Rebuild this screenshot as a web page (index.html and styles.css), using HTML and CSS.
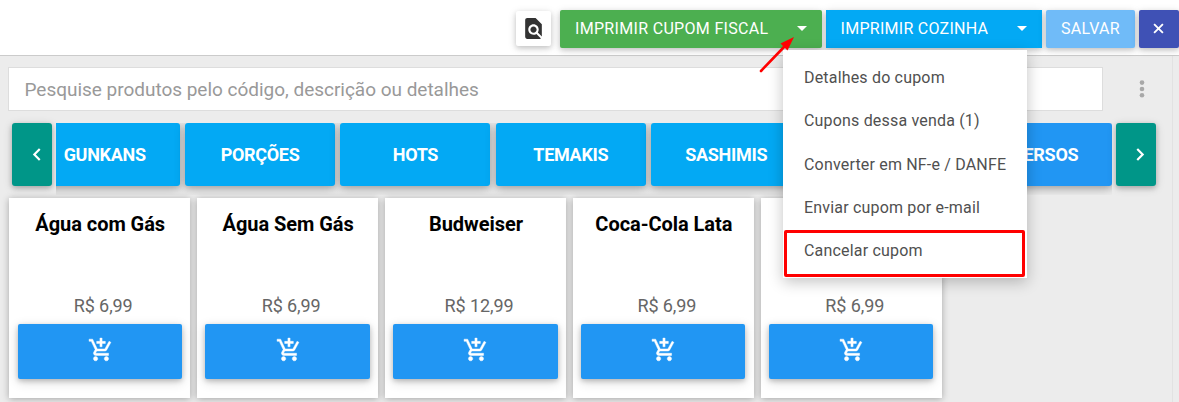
FILE: index.html
```html
<!DOCTYPE html>
<html lang="pt-BR">
<head>
  <meta charset="UTF-8" />
  <meta name="viewport" content="width=device-width, initial-scale=1.0"/>
  <title>Vendas</title>
  <link rel="stylesheet" href="styles.css">
</head>
<body>
  <svg class="sprite" aria-hidden="true">
    <symbol id="cart" viewBox="0 0 24 24">
      <path d="M11 9h2V6h3V4h-3V1h-2v3H8v2h3v3zm-4 9c-1.1 0-1.99.9-1.99 2S5.9 22 7 22s2-.9 2-2-.9-2-2-2zm10 0c-1.1 0-1.99.9-1.99 2s.89 2 1.99 2 2-.9 2-2-.9-2-2-2zm-9.83-3.25l.03-.12.9-1.63h7.45c.75 0 1.41-.41 1.75-1.03l3.86-7.01L19.42 4h-.01l-1.1 2-2.76 5H8.53l-.13-.27L6.16 6l-.95-2-.94-2H1v2h2l3.6 7.59-1.35 2.45c-.16.28-.25.61-.25.96 0 1.1.9 2 2 2h12v-2H7.42c-.13 0-.25-.11-.25-.25z"/>
    </symbol>
  </svg>

  <header class="topbar">
    <button class="btn btn-preview" aria-label="Visualizar">
      <svg viewBox="0 0 24 24"><path d="M20 19.59V8l-6-6H6c-1.1 0-1.99.9-1.99 2L4 20c0 1.1.89 2 1.99 2H18c.45 0 .85-.15 1.19-.4l-4.43-4.43c-.8.52-1.74.83-2.76.83-2.76 0-5-2.24-5-5s2.24-5 5-5 5 2.24 5 5c0 1.02-.31 1.96-.83 2.75L20 19.59zM9 13c0 1.66 1.34 3 3 3s3-1.34 3-3-1.34-3-3-3-3 1.34-3 3z"/></svg>
    </button>
    <div class="dropdown">
      <button class="btn btn-green"><span>IMPRIMIR CUPOM FISCAL</span><i class="caret"></i></button>
      <ul class="menu">
        <li>Detalhes do cupom</li>
        <li>Cupons dessa venda (1)</li>
        <li>Converter em NF-e / DANFE</li>
        <li>Enviar cupom por e-mail</li>
        <li class="marked">Cancelar cupom</li>
      </ul>
      <svg class="arrow" viewBox="0 0 40 40">
        <path d="M4 36L27 12" />
        <polygon points="37,2 23.5,8.5 30.5,15.5" />
      </svg>
    </div>
    <button class="btn btn-blue"><span>IMPRIMIR COZINHA</span><i class="caret"></i></button>
    <button class="btn btn-save">SALVAR</button>
    <button class="btn btn-close" aria-label="Fechar">
      <svg viewBox="0 0 10 10"><path d="M1 1l8 8M9 1l-8 8"/></svg>
    </button>
  </header>

  <main class="content">
    <div class="search">
      <input type="text" placeholder="Pesquise produtos pelo código, descrição ou detalhes" />
      <svg class="dots" viewBox="0 0 6 18"><circle cx="3" cy="2.6" r="2.3"/><circle cx="3" cy="9" r="2.3"/><circle cx="3" cy="15.2" r="2.3"/></svg>
    </div>

    <div class="categories">
      <button class="nav" aria-label="Anterior"><svg viewBox="0 0 8 12"><path d="M7 1L2 6l5 5"/></svg></button>
      <div class="track">
        <button class="cat">GUNKANS</button>
        <button class="cat">PORÇÕES</button>
        <button class="cat">HOTS</button>
        <button class="cat">TEMAKIS</button>
        <button class="cat">SASHIMIS</button>
        <button class="cat"></button>
        <button class="cat active">DIVERSOS</button>
      </div>
      <button class="nav" aria-label="Próximo"><svg viewBox="0 0 8 12"><path d="M1 1l5 5-5 5"/></svg></button>
    </div>

    <div class="products">
      <div class="card">
        <h3>Água com Gás</h3>
        <p>R$ 6,99</p>
        <button class="add"><svg><use href="#cart"/></svg></button>
      </div>
      <div class="card">
        <h3>Água Sem Gás</h3>
        <p>R$ 6,99</p>
        <button class="add"><svg><use href="#cart"/></svg></button>
      </div>
      <div class="card">
        <h3>Budweiser</h3>
        <p>R$ 12,99</p>
        <button class="add"><svg><use href="#cart"/></svg></button>
      </div>
      <div class="card">
        <h3>Coca-Cola Lata</h3>
        <p>R$ 6,99</p>
        <button class="add"><svg><use href="#cart"/></svg></button>
      </div>
      <div class="card">
        <h3></h3>
        <p>R$ 6,99</p>
        <button class="add"><svg><use href="#cart"/></svg></button>
      </div>
    </div>
  </main>
</body>
</html>
```
FILE: styles.css
```css
* {
  box-sizing: border-box;
}

body {
  margin: 0;
  height: 402px;
  overflow: hidden;
  font-family: Roboto, sans-serif;
  background: #ececec;
}

button {
  border: none;
  padding: 0;
  font-family: inherit;
  cursor: pointer;
}

.sprite {
  display: none;
}

.topbar {
  display: flex;
  justify-content: flex-end;
  align-items: flex-start;
  gap: 4px;
  height: 56px;
  padding-top: 10px;
  background: #fff;
  border-bottom: 1px solid #cbcbcb;
}

.btn {
  display: flex;
  align-items: center;
  justify-content: center;
  height: 38px;
  padding-bottom: 1px;
  border-radius: 2px;
  color: #fff;
  font-size: 16px;
  letter-spacing: 0.32px;
  box-shadow: 0 2px 5px rgba(0, 0, 0, 0.16), 0 2px 10px rgba(0, 0, 0, 0.12);
}

.btn-preview {
  width: 35px;
  height: 35px;
  margin: 1px 5px 0 0;
  background: #fff;
}

.btn-preview svg {
  width: 25px;
  height: 25px;
  fill: #333;
}

.btn-green,
.btn-blue {
  justify-content: space-between;
  padding: 0 15px 1px;
}

.btn-green {
  width: 262px;
  background: #4caf50;
}

.btn-blue {
  width: 216px;
  padding-left: 14.5px;
  background: #03a9f4;
  border-radius: 0;
  letter-spacing: 0.28px;
}

.caret {
  border: 5px solid transparent;
  border-top-color: #fff;
  border-bottom: none;
}

.btn-save {
  width: 89px;
  background: #70bbf8;
}

.btn-close {
  width: 40px;
  background: #3f51b5;
}

.btn-close svg {
  width: 11px;
  height: 11px;
  margin-right: 1px;
  stroke: #fff;
  stroke-width: 1.7;
}

.dropdown {
  position: relative;
}

.menu {
  position: absolute;
  z-index: 2;
  top: 40px;
  left: 223px;
  width: 244px;
  height: 228px;
  margin: 0;
  padding: 6px 0 0;
  list-style: none;
  background: #fff;
  box-shadow: 0 4px 14px rgba(0, 0, 0, 0.24);
}

.menu li {
  height: 43.25px;
  padding-left: 21px;
  line-height: 43.25px;
  font-size: 16px;
  letter-spacing: 0.18px;
  color: #505050;
  white-space: nowrap;
}

.menu .marked {
  height: 47px;
  margin: 1px 2px 0 1px;
  padding-left: 17px;
  border: 3px solid #f00;
  border-radius: 2px;
  line-height: 35px;
}

.arrow {
  position: absolute;
  z-index: 3;
  top: 25px;
  left: 197px;
  width: 40px;
  height: 40px;
  fill: #f00;
}

.arrow path {
  stroke: #f00;
  stroke-width: 2.6;
  stroke-linecap: round;
}

.content {
  width: 1173px;
  height: 346px;
  padding: 11px 0 0 8px;
  border-right: 1px solid #e2e2e2;
}

.search {
  display: flex;
  align-items: center;
}

.search input {
  width: 1095px;
  height: 44px;
  padding: 0 16px 0 15.5px;
  border: 1px solid #ddd;
  font-family: inherit;
  font-size: 19px;
  letter-spacing: -0.02px;
  background: #fff;
}

.search input::placeholder {
  color: #999;
}

.dots {
  width: 6px;
  height: 18px;
  margin-left: 35.5px;
  fill: #a8a8a8;
}

.categories {
  display: flex;
  gap: 4px;
  height: 87px;
  padding: 12px 0 0 4px;
}

.nav {
  width: 40px;
  height: 63px;
  padding: 2px 0 0 8px;
  border-radius: 3px;
  background: #009688;
  box-shadow: 0 2px 5px rgba(0, 0, 0, 0.2), 0 2px 10px rgba(0, 0, 0, 0.16);
}

.nav svg {
  width: 9px;
  height: 13px;
  fill: none;
  stroke: #fff;
  stroke-width: 2;
}

.track {
  display: flex;
  justify-content: flex-end;
  gap: 5.4px;
  width: 1056px;
  height: 72px;
  overflow: hidden;
}

.cat {
  flex: 0 0 150px;
  height: 63px;
  border-radius: 3px;
  background: #03a9f4;
  color: #fff;
  font-size: 18px;
  font-weight: 700;
  letter-spacing: -0.3px;
  box-shadow: 0 2px 6px rgba(0, 0, 0, 0.2), 0 3px 12px rgba(0, 0, 0, 0.18);
}

.cat.active {
  background: #2196f3;
}

.products {
  display: flex;
  gap: 6.5px;
  padding: 0 0 0 1px;
}

.card {
  width: 181.4px;
  height: 200px;
  padding: 0 8.6px;
  background: #fff;
  text-align: center;
  box-shadow: 0 1px 7px rgba(0, 0, 0, 0.3);
}

.card h3 {
  height: 90px;
  margin: 0;
  padding: 13px 0 0 1px;
  font-size: 20px;
  line-height: 26px;
  letter-spacing: -0.05px;
  color: #000;
}

.card p {
  margin: 6px 0;
  padding-left: 7px;
  font-size: 18px;
  line-height: 24px;
  letter-spacing: -0.1px;
  color: #666;
}

.add {
  width: 100%;
  height: 55px;
  padding-left: 2px;
  border-radius: 2px;
  background: #2196f3;
  box-shadow: 0 2px 5px rgba(0, 0, 0, 0.2), 0 3px 12px rgba(0, 0, 0, 0.16);
}

.add svg {
  width: 26px;
  height: 26px;
  fill: #fff;
  stroke: #fff;
  stroke-width: 0.4;
}
```
